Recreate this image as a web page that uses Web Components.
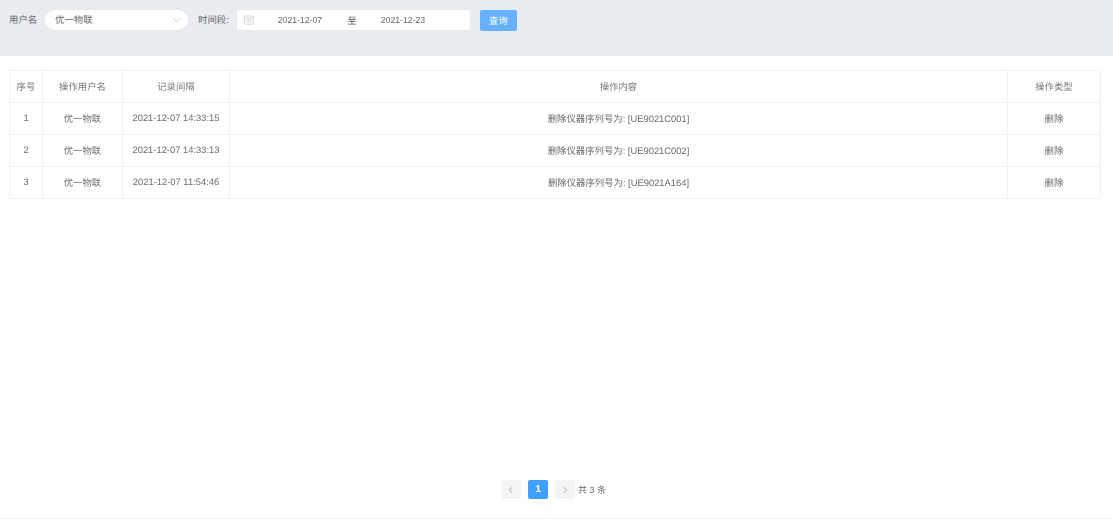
<!DOCTYPE html>
<html lang="zh"><head><meta charset="utf-8"><style>
html,body{margin:0;padding:0;background:#fff}
body{width:1113px;height:521px;overflow:hidden;font-family:"Liberation Sans","Noto Sans CJK SC",sans-serif;font-size:9.4px;color:#666;text-rendering:geometricPrecision}
log-page{filter:blur(.35px)}
</style></head><body>
<log-page></log-page>
<script>
function def(name,css,html,init){customElements.define(name,class extends HTMLElement{connectedCallback(){if(this.shadowRoot)return;const r=this.attachShadow({mode:'open'});r.innerHTML='<style>'+css+'</style>'+html;if(init)init.call(this,r)}})}
const chevron=d=>`<svg width="10" height="10" viewBox="0 0 10 10" fill="none" stroke="currentColor" stroke-width="1.2"><path d="${d}"/></svg>`;

def('filter-select',`:host{display:flex;align-items:center;justify-content:space-between;box-sizing:border-box;width:143px;height:20px;background:#fff;border-radius:10px;padding:0 6px 2px 10px;box-shadow:0 0 0 .5px #e2e5ea;color:#666}
svg{color:#c4c8cf}`,`<slot></slot><svg width="11" height="11" viewBox="0 0 11 11" fill="none" stroke="currentColor" stroke-width=".8"><path d="M1.5 3.8 5.5 7.6 9.5 3.8"/></svg>`);

def('date-range',`:host{display:flex;align-items:center;box-sizing:border-box;width:233px;height:20px;background:#fff;border-radius:2px;box-shadow:0 0 0 .5px #e2e5ea;color:#666;font-size:8.7px;padding-bottom:1px}
svg{margin-left:7px;flex:none;color:#c8ccd2}
span{display:block;text-align:center}
.a{width:70px;margin-left:11px}.t{width:34px;font-size:9.4px;color:#555}.b{width:68px}`,
`<svg width="10" height="10" viewBox="0 0 10 10" fill="none" stroke="currentColor" stroke-width=".8"><rect x=".6" y="1" width="8.8" height="8.2" rx=".5"/><path d="M.6 3.3h8.8M2.6 5.2h4.8M2.6 7h4.8"/></svg><span class="a"><slot name="start"></slot></span><span class="t">至</span><span class="b"><slot name="end"></slot></span>`);

def('query-button',`:host{display:flex;align-items:center;justify-content:center;box-sizing:border-box;width:37px;height:21px;background:#66b1ff;border-radius:2px;color:#fff;padding-bottom:1px}`,`<slot></slot>`);

def('filter-bar',`:host{display:flex;align-items:flex-start;box-sizing:border-box;height:56px;background:#e9ecf1;padding:10px 0 0 9px}
.l{line-height:19px;color:#666;white-space:nowrap}
.l1{width:28px;margin-right:8px}.l2{width:30px;margin:0 9px 0 10px}
query-button{margin-left:10px}`,
`<span class="l l1">用户名</span><filter-select>优一物联</filter-select><span class="l l2">时间段:</span><date-range><span slot="start">2021-12-07</span><span slot="end">2021-12-23</span></date-range><query-button>查询</query-button>`);

def('log-table',`:host{display:block;margin:14px 12px 0 9px;width:1092px}
.g{display:grid;grid-template-columns:33px 80px 107px 778px 93px;border-top:1px solid #eff1f6;border-left:1px solid #eff1f6;box-sizing:border-box;height:129px;grid-auto-rows:32px}
.c{display:flex;align-items:center;justify-content:center;border-right:1px solid #eff1f6;border-bottom:1px solid #eff1f6;color:#6b6b6b;white-space:nowrap;padding-bottom:2px;box-sizing:border-box}
.h{color:#777}`,`<div class="g"></div>`,function(r){
const rows=[['序号','操作用户名','记录间隔','操作内容','操作类型'],
['1','优一物联','2021-12-07 14:33:15','删除仪器序列号为: [UE9021C001]','删除'],
['2','优一物联','2021-12-07 14:33:13','删除仪器序列号为: [UE9021C002]','删除'],
['3','优一物联','2021-12-07 11:54:46','删除仪器序列号为: [UE9021A164]','删除']];
const g=r.querySelector('.g');
rows.forEach((row,i)=>row.forEach(t=>{const d=document.createElement('div');d.className='c'+(i?'':' h');d.textContent=t;g.appendChild(d)}));
});

def('page-button',`:host{display:flex;align-items:center;justify-content:center;width:20px;height:19px;border-radius:2px;background:#f4f4f5;color:#c0c4cc;box-sizing:border-box}
:host([active]){background:#409eff;color:#fff;font-weight:700;font-size:10px}`,`<slot></slot>`);

def('log-pager',`:host{display:flex;align-items:center;height:19px;gap:7px;padding-left:501px;color:#666}
.t{margin-left:-4px;font-size:9px;white-space:nowrap;padding-bottom:1px}`,
`<page-button>${chevron('M6.2 2.2 3.4 5l2.8 2.8')}</page-button><page-button active>1</page-button><page-button>${chevron('M3.8 2.2 6.6 5 3.8 7.8')}</page-button><span class="t">共 3 条</span>`);

def('log-page',`:host{display:flex;flex-direction:column;height:521px;box-sizing:border-box;position:relative}
log-pager{margin-top:auto;margin-bottom:22px}
.r{position:absolute;left:0;right:0;bottom:2px;height:1px;background:#f2f3f5}`,
`<filter-bar></filter-bar><log-table></log-table><log-pager></log-pager><div class="r"></div>`);
</script>
</body></html>
